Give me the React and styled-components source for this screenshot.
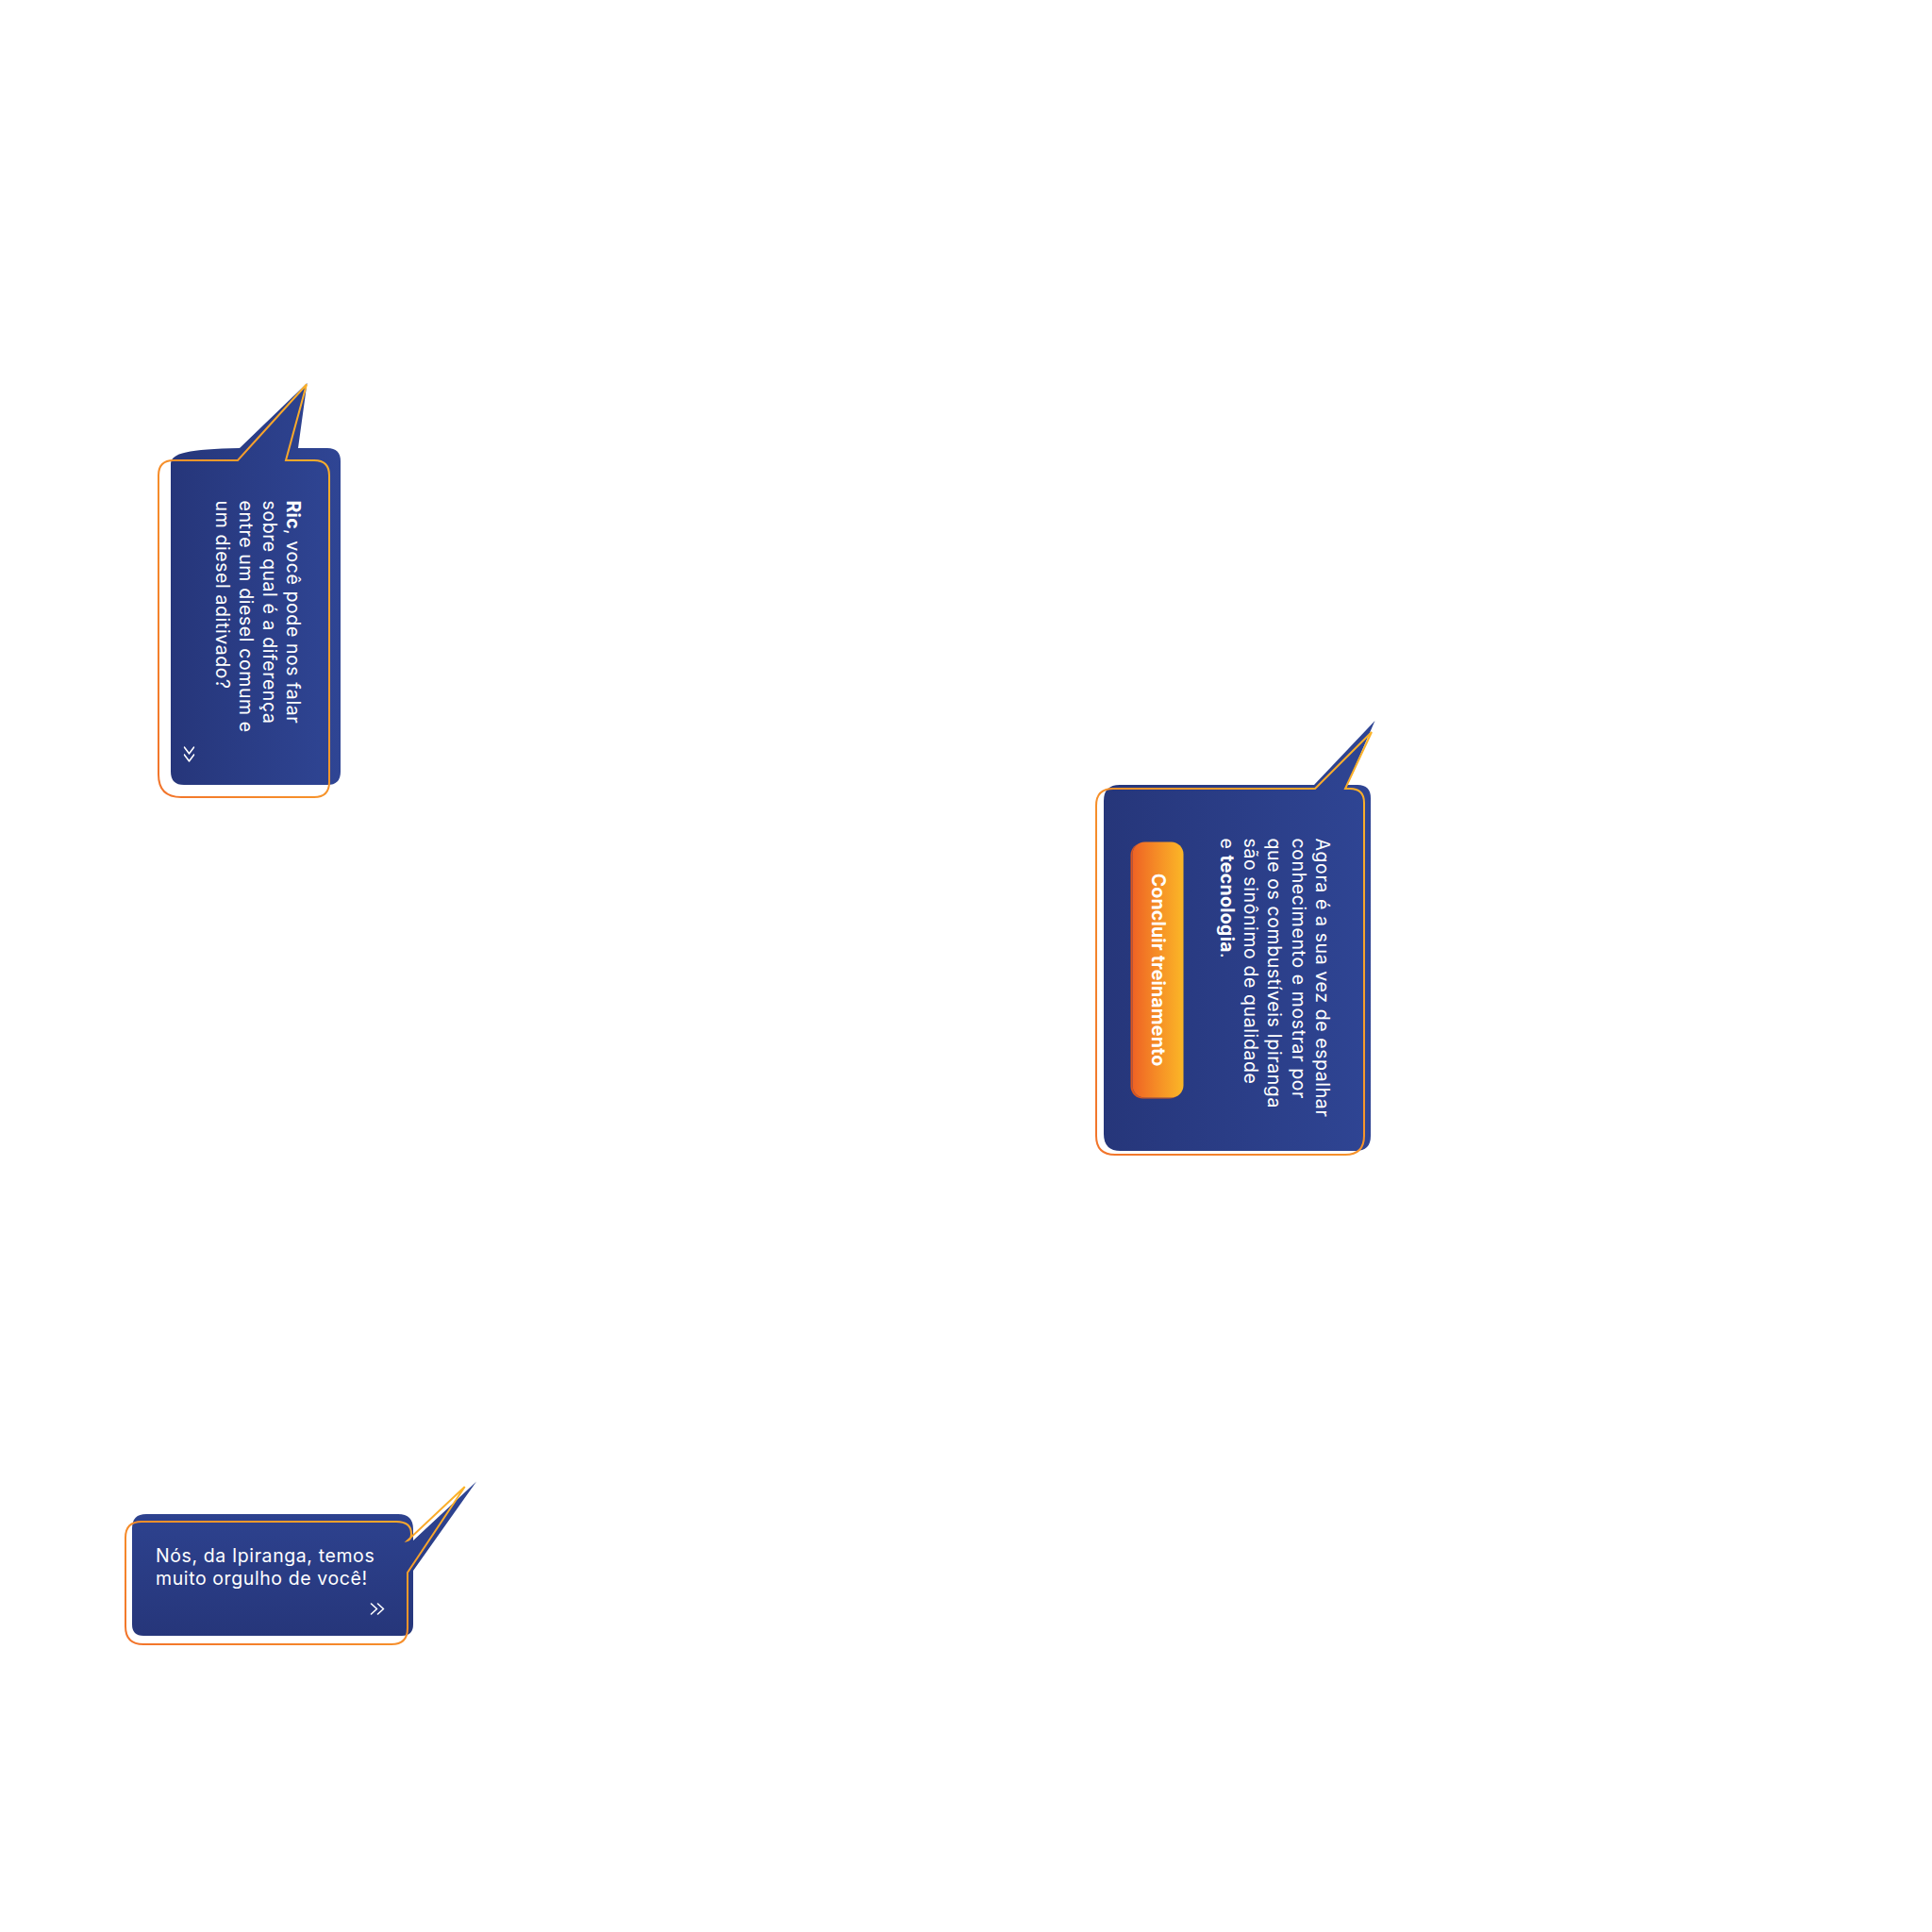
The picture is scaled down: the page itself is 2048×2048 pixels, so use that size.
import React, { useId } from 'react';
import styled, { createGlobalStyle } from 'styled-components';

const GlobalStyle = createGlobalStyle`
  html, body {
    margin: 0;
    padding: 0;
    background: #ffffff;
  }
  body {
    font-family: Inter, "Noto Sans", sans-serif;
  }
`;

const Canvas = styled.div`
  position: relative;
  width: 2048px;
  height: 2048px;
  background: #ffffff;
  overflow: hidden;
`;

// each bubble sits at its own spot on the free canvas
const BubbleSpot = styled.div`
  position: absolute;
  left: ${({ $x }) => $x}px;
  top: ${({ $y }) => $y}px;
  width: ${({ $w }) => $w}px;
  height: ${({ $h }) => $h}px;
`;

const ShapeLayer = styled.svg`
  position: absolute;
  left: 0;
  top: 0;
  overflow: visible;
`;

const TextFrame = styled.div`
  position: absolute;
  left: ${({ $x }) => $x}px;
  top: ${({ $y }) => $y}px;
  width: ${({ $w }) => $w}px;
  height: ${({ $h }) => $h}px;
  display: flex;
  flex-direction: column;
  transform: ${({ $turned }) => ($turned ? 'rotate(90deg)' : 'none')};
`;

const Message = styled.p`
  margin: 0;
  color: #ffffff;
  font-family: Inter, "Noto Sans", sans-serif;
  font-size: 19.5px;
  line-height: ${({ $lh }) => $lh || 25}px;
  font-weight: 400;
  letter-spacing: 0.6px;
  white-space: nowrap;

  & b {
    font-weight: 700;
    letter-spacing: 0.3px;
  }
`;

const NextWrap = styled.div`
  display: flex;
  justify-content: flex-end;
  margin-top: ${({ $gap }) => ($gap === 'auto' ? 'auto' : `${$gap}px`)};
  margin-right: ${({ $right }) => $right || 0}px;
  margin-bottom: ${({ $bottom }) => $bottom || 0}px;
`;

const ActionButton = styled.button`
  margin-top: auto;
  margin-left: 4px;
  width: 271px;
  height: 54px;
  border: 0;
  border-radius: 13px;
  background: linear-gradient(to bottom, #fbb727, #f58a26 55%, #ee6224);
  box-shadow: 1px 2px 0 #d9561f;
  color: #ffffff;
  font-family: Inter, "Noto Sans", sans-serif;
  font-size: 19.5px;
  font-weight: 700;
  letter-spacing: 0.2px;
  cursor: pointer;
`;

const NextArrow = ({ w = 16, h = 13 }) => (
  <svg width={w} height={h} viewBox="0 0 16 13" preserveAspectRatio="none">
    <path
      d="M1.5 1 L7.5 6.5 L1.5 12 M8.5 1 L14.5 6.5 L8.5 12"
      fill="none"
      stroke="#ffffff"
      strokeWidth="1.6"
      strokeLinecap="round"
      strokeLinejoin="round"
    />
  </svg>
);

const BubbleShape = ({ w, h, body, outline, vertical }) => {
  const id = useId().replace(/:/g, '');
  return (
    <ShapeLayer width={w} height={h} viewBox={`0 0 ${w} ${h}`}>
      <defs>
        <linearGradient
          id={`blue${id}`}
          x1="0"
          y1={vertical ? '1' : '0'}
          x2={vertical ? '0' : '1'}
          y2="0"
        >
          <stop offset="0" stopColor="#26367a" />
          <stop offset="1" stopColor="#2f4594" />
        </linearGradient>
        <linearGradient id={`line${id}`} x1="1" y1="0" x2="0" y2="1">
          <stop offset="0" stopColor="#fbb42a" />
          <stop offset="1" stopColor="#f2742b" />
        </linearGradient>
      </defs>
      <path d={body} fill={`url(#blue${id})`} />
      <path
        d={outline}
        fill="none"
        stroke={`url(#line${id})`}
        strokeWidth="2"
        strokeLinejoin="miter"
      />
    </ShapeLayer>
  );
};

const App = () => {
  return (
    <>
      <GlobalStyle />
      <Canvas>
        <BubbleSpot $x={160} $y={400} $w={210} $h={460}>
          <BubbleShape
            w={210}
            h={460}
            body="M 21 92 C 21 80 40 76 94 75 L 165.5 6 L 156 75 L 187 75 Q 201 75 201 89 L 201 418 Q 201 432 187 432 L 35 432 Q 21 432 21 418 Z"
            outline="M 8 104 Q 8 88 24 88 L 92 88 L 165 7.5 L 143 88 L 173 88 Q 189 88 189 104 L 189 429 Q 189 445 173 445 L 32 445 Q 8 445 8 421 Z"
          />
          <TextFrame $turned $x={-42.5} $y={205.5} $w={280} $h={129}>
            <Message>
              <b>Ric</b>, você pode nos falar
              <br />
              sobre qual é a diferença
              <br />
              entre um diesel comum e
              <br />
              um diesel aditivado?
            </Message>
            <NextWrap $gap="auto" $right={2} $bottom={1}>
              <NextArrow w={18} h={12} />
            </NextWrap>
          </TextFrame>
        </BubbleSpot>

        <BubbleSpot $x={1150} $y={750} $w={320} $h={490}>
          <BubbleShape
            w={320}
            h={490}
            body="M 20 99 Q 20 82 37 82 L 243 82 L 307.5 14 L 278 82 L 289 82 Q 303 82 303 96 L 303 454 Q 303 470 287 470 L 38 470 Q 20 470 20 452 Z"
            outline="M 12 104 Q 12 86 30 86 L 244 86 L 304 26 L 276 86 L 281 86 Q 296 86 296 101 L 296 454 Q 296 474 276 474 L 32 474 Q 12 474 12 454 Z"
          />
          <TextFrame $turned $x={5.5} $y={182.5} $w={302} $h={213}>
            <Message $lh={25.3}>
              Agora é a sua vez de espalhar
              <br />
              conhecimento e mostrar por
              <br />
              que os combustíveis Ipiranga
              <br />
              são sinônimo de qualidade
              <br />e <b>tecnologia</b>.
            </Message>
            <ActionButton type="button">Concluir treinamento</ActionButton>
          </TextFrame>
        </BubbleSpot>

        <BubbleSpot $x={120} $y={1560} $w={400} $h={200}>
          <BubbleShape
            w={400}
            h={200}
            vertical
            body="M 35 45 L 302 45 Q 318 45 318 61 L 318 73 L 385 10.5 L 318 105 L 318 162 Q 318 174 306 174 L 32 174 Q 20 174 20 162 L 20 60 Q 20 45 35 45 Z"
            outline="M 13 70 Q 13 53 30 53 L 300 53 Q 316 53 316 66 Q 316 72 312 73 L 372.7 16 L 312 107 L 312 166 Q 312 183 295 183 L 32 183 Q 13 183 13 164 Z"
          />
          <TextFrame $x={45} $y={77} $w={245} $h={80}>
            <Message $lh={24}>
              Nós, da Ipiranga, temos
              <br />
              muito orgulho de você!
            </Message>
            <NextWrap $gap={14} $right={2}>
              <NextArrow />
            </NextWrap>
          </TextFrame>
        </BubbleSpot>
      </Canvas>
    </>
  );
};

export default App;
